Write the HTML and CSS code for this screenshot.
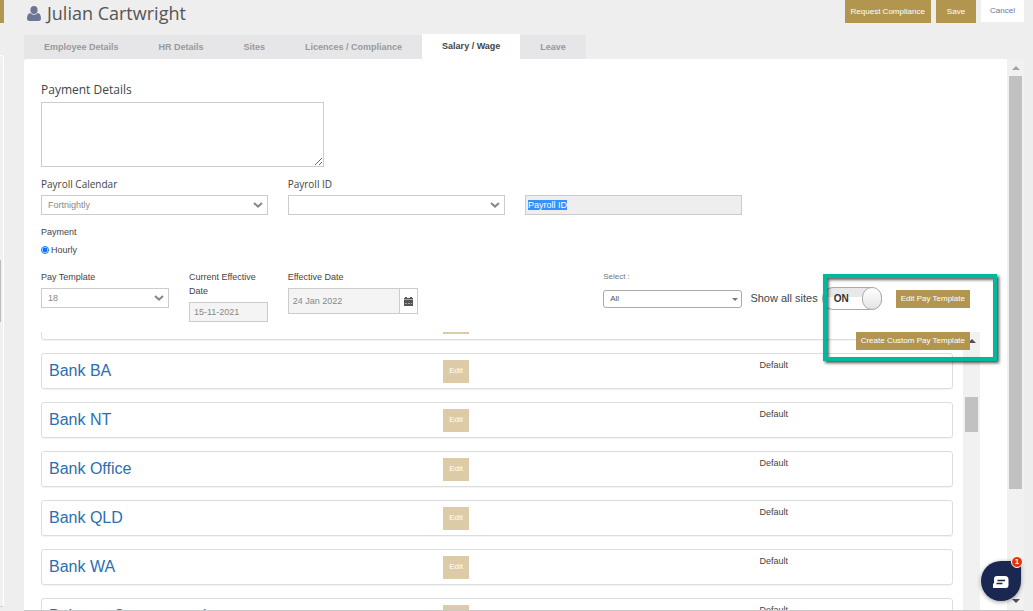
FILE: index.html
```html
<!DOCTYPE html>
<html lang="en">

<head>
    <meta charset="UTF-8">
    <meta name="viewport" content="width=device-width, initial-scale=1.0">
    <title>Julian Cartwright - Salary / Wage</title>
    <link rel="stylesheet" href="styles.css">
</head>

<body>
    <aside class="side">
        <div class="side-btn"></div>
        <div class="side-panel">
            <div class="side-thumb"></div>
        </div>
    </aside>

    <div class="page">
        <header class="header">
            <h1 class="name">
                <svg class="user-icon" viewBox="0 0 14 15" aria-hidden="true">
                    <ellipse cx="7" cy="4" rx="3.6" ry="4" />
                    <path d="M3.4 7C1 7.400 0 9.500 0 12.500C0 14 .9 15 2.400 15H11.600C13.100 15 14 14 14 12.500C14 9.500 13 7.400 10.600 7C9.600 8.200 8.400 8.800 7 8.800S4.400 8.200 3.400 7Z" />
                </svg>
                Julian Cartwright
            </h1>
            <div class="header-btns">
                <button class="btn btn-top" type="button">Request Compliance</button>
                <button class="btn btn-top btn-save" type="button">Save</button>
                <button class="btn btn-top btn-cancel" type="button">Cancel</button>
            </div>
        </header>

        <nav class="tabs">
            <a href="#employee">Employee Details</a>
            <a href="#hr">HR Details</a>
            <a href="#sites">Sites</a>
            <a href="#licences">Licences / Compliance</a>
            <a class="active" href="#salary">Salary / Wage</a>
            <a href="#leave">Leave</a>
        </nav>

        <main class="card">
            <div class="content">
                <form class="form">
                    <label class="title" for="details">Payment Details</label>
                    <textarea class="details" id="details"></textarea>

                    <div class="row">
                        <div class="field">
                            <label class="label-lg" for="calendar">Payroll Calendar</label>
                            <div class="select">
                                <select id="calendar">
                                    <option>Fortnightly</option>
                                </select>
                                <svg class="chevron" viewBox="0 0 10 6" aria-hidden="true"><path d="M1 1L5 4.600L9 1" /></svg>
                            </div>
                        </div>
                        <div class="field">
                            <label class="label-lg" for="payroll-type">Payroll ID</label>
                            <div class="select">
                                <select id="payroll-type">
                                    <option></option>
                                </select>
                                <svg class="chevron" viewBox="0 0 10 6" aria-hidden="true"><path d="M1 1L5 4.600L9 1" /></svg>
                            </div>
                        </div>
                        <label class="field payroll-id">
                            <span class="selected">Payroll ID</span>
                            <input type="text" aria-label="Payroll ID" disabled>
                        </label>
                    </div>

                    <fieldset class="payment">
                        <legend>Payment</legend>
                        <label class="radio"><input type="radio" name="payment" checked>Hourly</label>
                    </fieldset>

                    <div class="row">
                        <div class="pair">
                            <div class="field">
                                <label for="template">Pay Template</label>
                                <div class="select">
                                    <select id="template">
                                        <option>18</option>
                                    </select>
                                    <svg class="chevron" viewBox="0 0 10 6" aria-hidden="true"><path d="M1 1L5 4.600L9 1" /></svg>
                                </div>
                            </div>
                            <div class="field">
                                <label for="current">Current Effective Date</label>
                                <input class="input" id="current" type="text" value="15-11-2021" disabled>
                            </div>
                        </div>
                        <div class="field">
                            <label for="effective">Effective Date</label>
                            <div class="date">
                                <input class="input" id="effective" type="text" value="24 Jan 2022" disabled>
                                <button class="date-btn" type="button" aria-label="Pick a date">
                                    <svg viewBox="0 0 9 9" aria-hidden="true">
                                        <path d="M0 1H1V0H3V1H6V0H8V1H9V2.500H0ZM0 3H9V9H0Z" />
                                        <path class="date-line" d="M1 6.500H8" />
                                    </svg>
                                </button>
                            </div>
                        </div>
                        <div class="field filter">
                            <label for="filter">Select :</label>
                            <div class="select select-round">
                                <select id="filter">
                                    <option>All</option>
                                </select>
                                <span class="caret"></span>
                            </div>
                        </div>
                        <div class="actions">
                            <label class="show-all" for="all-sites">Show all sites</label>
                            <label class="switch">
                                <input id="all-sites" type="checkbox" checked>
                                <span class="switch-text">ON</span>
                                <span class="knob"></span>
                            </label>
                            <button class="btn btn-edit" type="button">Edit Pay Template</button>
                            <button class="btn btn-create" type="button">Create Custom Pay Template</button>
                            <div class="highlight"></div>
                        </div>
                    </div>
                </form>

                <section class="sites">
                    <ul class="list">
                        <li><a href="#bank-act"></a><button class="btn btn-row" type="button" aria-label="Edit"></button></li>
                        <li><a href="#bank-ba">Bank BA</a><button class="btn btn-row" type="button">Edit</button><span>Default</span></li>
                        <li><a href="#bank-nt">Bank NT</a><button class="btn btn-row" type="button">Edit</button><span>Default</span></li>
                        <li><a href="#bank-office">Bank Office</a><button class="btn btn-row" type="button">Edit</button><span>Default</span></li>
                        <li><a href="#bank-qld">Bank QLD</a><button class="btn btn-row" type="button">Edit</button><span>Default</span></li>
                        <li><a href="#bank-wa">Bank WA</a><button class="btn btn-row" type="button">Edit</button><span>Default</span></li>
                        <li><a href="#balmoor">Balmoor Court ground</a><button class="btn btn-row" type="button">Edit</button><span>Default</span></li>
                    </ul>
                    <div class="scroll scroll-list">
                        <span class="arrow-up"></span>
                        <div class="thumb"></div>
                    </div>
                </section>
            </div>

            <div class="scroll scroll-main">
                <span class="arrow-up"></span>
                <div class="thumb"></div>
                <span class="arrow-down"></span>
            </div>
        </main>
    </div>

    <button class="chat" type="button" aria-label="Open chat">
        <svg viewBox="0 0 16 12" aria-hidden="true">
            <path class="bubble" d="M4 0H12Q15 0 15.500 3V9Q15.500 12 13 12H0V8L1 7V3Q1 0 4 0Z" />
            <path class="lines" d="M4.500 4.500H12M3.500 7.500H9.500" />
        </svg>
        <span class="badge">1</span>
    </button>
</body>

</html>
```
FILE: styles.css
```css
* {
    box-sizing: border-box;
}

body {
    display: flex;
    height: 100vh;
    margin: 0;
    overflow: hidden;
    background: #eee;
    color: #444;
    font-family: "Liberation Sans", Arial, sans-serif;
    font-size: 9px;
    line-height: 14px;
}

button,
input,
select,
textarea {
    font: inherit;
    color: inherit;
}

/* left panel */
.side {
    display: flex;
    flex-direction: column;
    width: 4px;
    margin-right: 20px;
    padding-bottom: 4px;
}

.side-btn {
    height: 23px;
    margin-bottom: 32px;
    background: #b29650;
}

.side-panel {
    flex: 1;
    padding-top: 204px;
    background: #f1f1f1;
    border: solid #fff;
    border-width: 1px 1px 0 0;
    border-bottom: 1px solid #ccc;
    border-radius: 0 3px 3px 0;
}

.side-thumb {
    width: 1px;
    height: 62px;
    background: #bbb;
}

.page {
    display: flex;
    flex: 1;
    flex-direction: column;
    min-width: 0;
    margin-right: 9px;
}

/* header */
.header {
    display: flex;
    justify-content: space-between;
    align-items: flex-start;
    height: 34px;
}

.name {
    display: flex;
    align-items: center;
    gap: 6px;
    margin: 0 0 0 3px;
    color: #555;
    font: 18px/26px "Open Sans", sans-serif;
}

.user-icon {
    width: 14px;
    height: 15px;
    fill: #6c7595;
}

.header-btns {
    display: flex;
    align-items: flex-start;
    gap: 5px;
}

.btn {
    height: 18px;
    padding: 0 5px;
    border: 0;
    background: #b29650;
    color: #fff;
    font-size: 8px;
    line-height: 16px;
    white-space: nowrap;
}

.btn-top {
    height: 23px;
    padding: 0 6px;
}

.btn-save {
    padding: 0 11px;
}

.btn-cancel {
    height: 22px;
    padding: 0 9px;
    background: #fff;
    color: #6c7595;
}

/* tabs */
.tabs {
    display: flex;
    align-items: flex-end;
}

.tabs a {
    padding: 0 20px;
    background: #e6e6e8;
    color: #999;
    font-weight: bold;
    line-height: 24px;
    text-decoration: none;
}

.tabs .active {
    background: #fff;
    color: #444;
    line-height: 25px;
}

/* card */
.card {
    display: flex;
    flex: 1;
    min-height: 0;
    background: #fff;
    border-bottom: 1px solid #c8c8c8;
    border-radius: 3px 0 0 0;
}

.content {
    display: flex;
    flex: 1;
    flex-direction: column;
    min-width: 0;
    padding: 24px 27px 0 17px;
}

.form {
    padding: 0 10px 10px 0;
}

.title {
    display: block;
    margin-bottom: 5px;
    font-family: "Open Sans", sans-serif;
    font-size: 12px;
}

.details {
    display: block;
    width: 30.5%;
    height: 65px;
    margin-bottom: 10px;
    background: #fff;
    border: 1px solid #ccc;
}

.row {
    display: grid;
    grid-template-columns: minmax(0, 24fr) minmax(0, 23fr) minmax(0, 23fr) minmax(0, 22fr);
    gap: 20px;
}

.pair {
    display: grid;
    grid-template-columns: 13fr 8fr;
    gap: 20px;
}

.field label {
    display: block;
    margin-bottom: 4px;
}

.field .label-lg {
    font-family: "Open Sans", sans-serif;
    font-size: 10px;
}

.select {
    position: relative;
}

.select select {
    display: block;
    width: 100%;
    height: 20px;
    padding: 0 6px;
    background: #fff;
    border: 1px solid #ccc;
    border-radius: 0;
    color: #888;
    appearance: none;
}

.chevron {
    position: absolute;
    top: 7px;
    right: 5px;
    width: 10px;
    height: 6px;
    fill: none;
    stroke: #888;
    stroke-width: 2;
    pointer-events: none;
}

.input {
    display: block;
    width: 100%;
    height: 20px;
    padding: 0 4px;
    background: #f4f4f4;
    border: 1px solid #ccc;
    color: #888;
}

.payroll-id {
    display: flex;
    align-self: end;
    align-items: center;
    height: 20px;
    padding: 0 2px;
    background: #eee;
    border: 1px solid #ccc;
}

.payroll-id input {
    flex: 1;
    min-width: 0;
    height: 18px;
    padding: 0;
    background: none;
    border: 0;
}

.selected {
    background: #3390ff;
    color: #fff;
    line-height: 10px;
}

.payment {
    margin: 0;
    padding: 10px 0 13px;
    border: 0;
}

.payment legend {
    float: left;
    width: 100%;
    margin-bottom: 4px;
    padding: 0;
}

.radio {
    display: flex;
    clear: both;
    align-items: center;
    gap: 2px;
}

.radio input {
    width: 8px;
    height: 8px;
    margin: 0;
}

.date {
    display: flex;
    width: 60%;
}

.date .input {
    height: 26px;
}

.date-btn {
    flex: none;
    width: 19px;
    height: 26px;
    margin-left: -1px;
    padding: 0 4px;
    background: #fff;
    border: 1px solid #ccc;
}

.date-btn svg {
    display: block;
    width: 9px;
    height: 9px;
    fill: #555;
}

.date-line {
    stroke: #aaa;
    stroke-dasharray: 2 1;
}

.filter {
    width: 64%;
    margin-left: auto;
    color: #777;
    font-size: 8px;
}

.select-round select {
    height: 18px;
    margin-top: 6px;
    border-color: #aaa;
    border-radius: 3px;
    color: #555;
}

.caret {
    position: absolute;
    top: 8px;
    right: 4px;
    border: 3px solid transparent;
    border-top-color: #777;
    border-bottom: 0;
    pointer-events: none;
}

.actions {
    position: relative;
    display: flex;
    justify-self: end;
    align-items: flex-start;
    width: max-content;
    padding-top: 17px;
}

.show-all {
    margin-right: 4px;
    font-size: 11px;
    line-height: 23px;
}

.switch {
    position: relative;
    width: 60px;
    height: 23px;
    margin-right: 14px;
    padding-left: 11px;
    background: linear-gradient(#e8e8e8 45%, #fff 45%);
    border: 1px solid #aaa;
    border-radius: 11px;
}

.switch input {
    position: absolute;
    inset: 0;
    width: 100%;
    height: 100%;
    margin: 0;
    opacity: 0;
}

.switch-text {
    color: #333;
    font-size: 10px;
    font-weight: bold;
    line-height: 21px;
}

.knob {
    position: absolute;
    top: -1px;
    right: -1px;
    width: 20px;
    height: 23px;
    background: linear-gradient(#fff, #e4e4e4);
    border: 1px solid #aaa;
    border-radius: 10px;
}

.btn-edit {
    margin-top: 3px;
}

.btn-create {
    position: absolute;
    top: 62px;
    right: 0;
    z-index: 1;
}

/* callout over the template buttons */
.highlight {
    position: absolute;
    top: 4px;
    right: -27px;
    z-index: 2;
    width: 174px;
    height: 87px;
    border: 4px solid #00b89c;
    box-shadow: 2px 2px 3px rgba(0, 0, 0, .7), inset 2px 2px 3px rgba(0, 0, 0, .6);
    pointer-events: none;
}

/* sites list */
.sites {
    display: flex;
    flex: 1;
    min-height: 0;
    gap: 10px;
    overflow: hidden;
}

.list {
    flex: 1;
    margin: -28px 0 0;
    padding: 0;
    list-style: none;
}

.list li {
    display: grid;
    grid-template-columns: 395fr 317fr 193fr;
    align-items: center;
    height: 36px;
    margin-bottom: 13px;
    padding-left: 7px;
    border: 1px solid #ddd;
    border-radius: 3px;
    box-shadow: 0 1px 1px rgba(0, 0, 0, .05);
}

.list a {
    color: #2a6fb0;
    font-size: 16px;
    line-height: 20px;
    text-decoration: none;
}

.list span {
    align-self: start;
    padding-top: 4px;
}

.btn-row {
    justify-self: start;
    min-width: 26px;
    height: 23px;
    padding: 0 6px;
    background: #dccba6;
}

/* scrollbars */
.scroll {
    display: flex;
    flex: none;
    flex-direction: column;
    align-items: center;
    width: 17px;
    background: #f1f1f1;
}

.thumb {
    width: 13px;
    background: #c1c1c1;
}

.arrow-up,
.arrow-down {
    width: 8px;
    border: 4px solid transparent;
}

.arrow-up {
    border-top: 0;
    border-bottom-color: #a3a3a3;
}

.arrow-down {
    margin-top: auto;
    border-top-color: #505050;
    border-bottom: 0;
}

.scroll-main {
    padding: 7px 0;
}

.scroll-main .thumb {
    flex: 0 0 77%;
    margin-top: 6px;
}

.scroll-list {
    padding-top: 7px;
}

.scroll-list .arrow-up {
    border-bottom-color: #505050;
}

.scroll-list .thumb {
    height: 35px;
    margin-top: 54px;
}

/* chat launcher */
.chat {
    position: fixed;
    right: 12px;
    bottom: 10px;
    z-index: 3;
    display: flex;
    align-items: center;
    justify-content: center;
    width: 40px;
    height: 40px;
    padding: 2px 0 0;
    background: #1a2750;
    border: 0;
    border-radius: 50% 3px 50% 50%;
    box-shadow: 0 1px 4px rgba(0, 0, 0, .4);
}

.chat svg {
    width: 16px;
    height: 12px;
}

.bubble {
    fill: #fff;
}

.lines {
    fill: none;
    stroke: #1a2750;
    stroke-width: 1.5;
}

.badge {
    position: absolute;
    top: -5px;
    right: -2px;
    width: 12px;
    height: 12px;
    background: #e0340f;
    border: 1px solid #fff;
    border-radius: 50%;
    color: #fff;
    font-size: 8px;
    font-weight: bold;
    line-height: 10px;
}
```
